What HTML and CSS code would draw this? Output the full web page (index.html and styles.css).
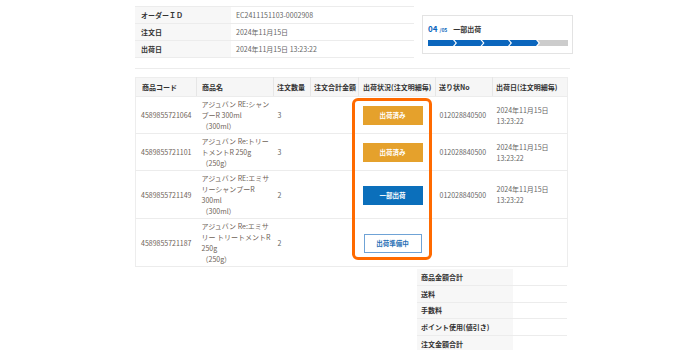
FILE: index.html
```html
<!DOCTYPE html>
<html lang="ja">
<head>
<meta charset="utf-8">
<link rel="stylesheet" href="styles.css">
</head>
<body>
<div class="page">
  <div class="top">
    <table class="info">
      <tr><th>オーダーＩＤ</th><td>EC2411151103-0002908</td></tr>
      <tr><th>注文日</th><td>2024年11月15日</td></tr>
      <tr><th>出荷日</th><td>2024年11月15日 13:23:22</td></tr>
    </table>
    <div class="progress">
      <div class="ptext"><span class="pnum">04</span><span class="ptot">/05</span><span class="plabel">一部出荷</span></div>
      <svg class="pbar" width="140" height="6" viewBox="0 0 140 6">
        <polygon fill="#0b66bd" points="0,0 25,0 27.5,3 25,6 0,6"/>
        <polygon fill="#0b66bd" points="26.5,0 52.5,0 55,3 52.5,6 26.5,6 29,3"/>
        <polygon fill="#0b66bd" points="54,0 80,0 82.5,3 80,6 54,6 56.5,3"/>
        <polygon fill="#0b66bd" points="81.5,0 108,0 110.5,3 108,6 81.5,6 84,3"/>
        <polygon fill="#cccccc" points="109.5,0 140,0 140,6 109.5,6 112,3"/>
      </svg>
    </div>
  </div>
  <div class="sep"></div>
  <div class="detail">
    <table class="items">
      <colgroup>
        <col class="c1"><col class="c2"><col class="c3"><col class="c4"><col class="c5"><col class="c6"><col class="c7">
      </colgroup>
      <thead>
        <tr><th>商品コード</th><th>商品名</th><th>注文数量</th><th>注文合計金額</th><th>出荷状況(注文明細毎)</th><th>送り状No</th><th>出荷日(注文明細毎)</th></tr>
      </thead>
      <tbody>
        <tr class="r3">
          <td class="code">4589855721064</td>
          <td class="name">アジュバン RE:シャンプーR 300ml<br>（300ml）</td>
          <td>3</td><td></td>
          <td><span class="btn done">出荷済み</span></td>
          <td>012028840500</td>
          <td>2024年11月15日<br>13:23:22</td>
        </tr>
        <tr class="r3">
          <td class="code">4589855721101</td>
          <td class="name">アジュバン Re:トリートメントR 250g<br>（250g）</td>
          <td>3</td><td></td>
          <td><span class="btn done">出荷済み</span></td>
          <td>012028840500</td>
          <td>2024年11月15日<br>13:23:22</td>
        </tr>
        <tr class="r4">
          <td class="code">4589855721149</td>
          <td class="name">アジュバン RE:エミサリーシャンプーR<br>300ml<br>（300ml）</td>
          <td>2</td><td></td>
          <td><span class="btn part">一部出荷</span></td>
          <td>012028840500</td>
          <td>2024年11月15日<br>13:23:22</td>
        </tr>
        <tr class="r4">
          <td class="code">4589855721187</td>
          <td class="name">アジュバン Re:エミサリー トリートメントR<br>250g<br>（250g）</td>
          <td>2</td><td></td>
          <td><span class="btn prep">出荷準備中</span></td>
          <td></td>
          <td></td>
        </tr>
      </tbody>
    </table>
    <div class="highlight"></div>
  </div>
  <table class="summary">
    <tr><th>商品金額合計</th><td></td></tr>
    <tr><th>送料</th><td></td></tr>
    <tr><th>手数料</th><td></td></tr>
    <tr><th>ポイント使用(値引き)</th><td></td></tr>
    <tr><th>注文金額合計</th><td></td></tr>
  </table>
</div>
</body>
</html>
```
FILE: styles.css
```css
html, body {
  margin: 0;
  background: #ffffff;
}
body {
  font-family: "Noto Sans CJK JP", "Noto Sans", sans-serif;
  font-size: 7px;
  color: #666;
}
.page {
  margin-left: 135px;
  width: 440px;
  padding-top: 6px;
}
.top {
  display: flex;
  gap: 8px;
  align-items: flex-start;
}
.info {
  width: 279px;
  border-collapse: collapse;
}
.info th, .info td {
  height: 16px;
  padding: 0 6px;
  border-top: 1px solid #ececec;
  border-bottom: 1px solid #ececec;
  text-align: left;
  line-height: 10px;
}
.info th {
  width: 84px;
  background: #f7f7f7;
  color: #333;
  font-weight: bold;
}
.info td {
  color: #666;
  padding-left: 5px;
}
.progress {
  margin-top: 9px;
  width: 151px;
  height: 39px;
  box-sizing: border-box;
  border: 1px solid #e3e3e3;
  padding: 6px 5px 0 5px;
}
.ptext {
  display: flex;
  align-items: baseline;
  height: 16px;
  line-height: 12px;
  margin-top: 1px;
}
.pnum {
  color: #0b66bd;
  font-weight: bold;
  font-size: 8px;
}
.ptot {
  color: #0b66bd;
  font-size: 5px;
  margin-left: 2px;
  font-weight: bold;
}
.plabel {
  color: #333;
  font-weight: bold;
  margin-left: 6px;
}
.pbar {
  display: block;
  margin-top: 1px;
}
.sep {
  margin-top: 10px;
  width: 435px;
  border-top: 1px solid #ececec;
}
.detail {
  position: relative;
  margin-top: 8px;
}
.items {
  width: 432px;
  table-layout: fixed;
  border-collapse: collapse;
  border: 1px solid #ededed;
}
.c1 { width: 61px; }
.c2 { width: 77px; }
.c3 { width: 37px; }
.c4 { width: 48px; }
.c5 { width: 77px; }
.c6 { width: 57px; }
.c7 { width: 75px; }
.items th {
  height: 18px;
  background: #f6f6f6;
  color: #333;
  font-weight: bold;
  text-align: left;
  padding: 0 3px;
  border-left: 1px solid #e6e6e6;
  border-bottom: 1px solid #ececec;
  white-space: nowrap;
  overflow: hidden;
}
.items th:first-child {
  border-left: none;
  padding-left: 6px;
}
.items th:nth-child(2) { padding-left: 5px; }
.items th:nth-child(5) { padding-left: 4px; }
.items td {
  padding: 2px 4px 1px 4px;
  line-height: 11px;
  vertical-align: middle;
  border-bottom: 1px solid #ececec;
  color: #666;
}
.items td:first-child {
  padding-left: 5px;
}
.r3 td { height: 33px; }
.r4 td { height: 43px; }
.items td.code,
.items td.name {
  color: #6e6257;
}
.items td.name {
  padding-left: 5px;
  padding-right: 3px;
}
.btn {
  display: block;
  width: 60px;
  height: 19px;
  box-sizing: border-box;
  line-height: 19px;
  text-align: center;
  font-size: 6.5px;
  font-weight: bold;
  color: #fff;
}
.done { background: #e5a12c; }
.part { background: #0b6fbb; }
.prep {
  width: 58px;
  margin-left: 1px;
  background: #fff;
  color: #1f6eb5;
  border: 1px solid #6fa3d6;
  line-height: 17px;
}
.highlight {
  position: absolute;
  left: 217px;
  top: 21px;
  width: 80px;
  height: 162px;
  box-sizing: border-box;
  border: 3px solid #ff6a00;
  border-radius: 6px;
}
.summary {
  margin-left: 282px;
  margin-top: 2px;
  width: 150px;
  border-collapse: collapse;
}
.summary th, .summary td {
  height: 16.6px;
  box-sizing: border-box;
  border-bottom: 1px solid #ececec;
  padding: 0;
  line-height: 10px;
}
.summary th {
  width: 96px;
  padding-left: 4px;
  background: #f7f7f7;
  color: #333;
  font-weight: bold;
  text-align: left;
}
```
